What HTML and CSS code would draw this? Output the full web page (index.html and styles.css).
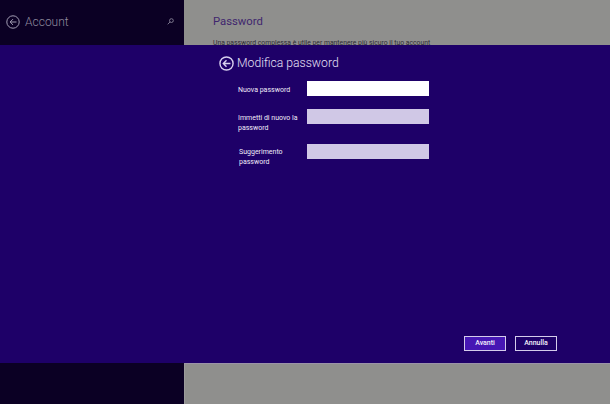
FILE: index.html
```html
<!DOCTYPE html>
<html lang="it">
<head>
<meta charset="utf-8">
<title>Modifica password</title>
<link rel="stylesheet" href="styles.css">
</head>
<body>
<div class="screen">
  <header class="top">
    <div class="side side-head">
      <svg class="back back-dim" viewBox="0 0 16 16" width="14" height="14"><circle cx="8" cy="8" r="7.1"/><path d="M12 8H5M8 4.7 4.7 8 8 11.3"/></svg>
      <span class="side-title">Account</span>
      <svg class="search" viewBox="0 0 10 10" width="7" height="7"><circle cx="6.3" cy="3.7" r="2.7"/><path d="M4.3 5.7 1 9"/></svg>
    </div>
    <div class="pane">
      <h2 class="pane-title">Password</h2>
      <p class="pane-text">Una password complessa è utile per mantenere più sicuro il tuo account</p>
    </div>
  </header>
  <main class="dialog">
    <div class="dialog-body">
      <div class="dialog-head">
        <svg class="back" viewBox="0 0 16 16" width="15" height="15"><circle cx="8" cy="8" r="7"/><path d="M12.2 8H5M8 4.6 4.6 8 8 11.4"/></svg>
        <h1 class="dialog-title">Modifica password</h1>
      </div>
      <form class="form">
        <label class="field field-a"><span class="label">Nuova password</span><span class="input input-active"></span></label>
        <label class="field field-b"><span class="label">Immetti di nuovo la password</span><span class="input"></span></label>
        <label class="field field-c"><span class="label label-c">Suggerimento password</span><span class="input"></span></label>
      </form>
    </div>
    <div class="actions">
      <span class="btn btn-primary">Avanti</span>
      <span class="btn">Annulla</span>
    </div>
  </main>
  <footer class="bottom">
    <div class="side"></div>
    <div class="pane"></div>
  </footer>
</div>
</body>
</html>
```
FILE: styles.css
```css
* { box-sizing: border-box; }
html, body { margin: 0; height: 100%; overflow: hidden; }
body { font-family: Roboto, "Liberation Sans", sans-serif; background: #8f8f8f; }
.screen { width: 610px; height: 404px; display: flex; flex-direction: column; }
.top { height: 45px; display: flex; overflow: hidden; flex: none; }
.bottom { height: 41px; display: flex; flex: none; }
.side { width: 184px; background: #0b0024; flex: none; }
.pane { flex: 1; background: #8f8f8d; }
.bottom .pane { border-top: 1px solid #9b93a8; box-shadow: inset 1px 0 0 #9b9b9b; }
.side-head { display: flex; align-items: center; padding: 0 0 2px 6px; }
.back { fill: none; stroke: #d8d0ee; stroke-width: 1.5; flex: none; }
.back-dim { stroke: #a8a2b8; stroke-width: 1.1; }
.side-title { margin-left: 5px; font-size: 12px; font-weight: 300; color: #8f8a9e; flex: 1; }
.search { fill: none; stroke: #8f8a9e; stroke-width: 1.2; margin-right: 10px; }
.pane { padding-left: 29px; }
.pane-title { margin: 14px 0 0; font-size: 11.3px; line-height: 16px; font-weight: 400; color: #40266e; }
.pane-text { margin: 8px 0 0; font-size: 6.8px; line-height: 10px; color: #2c2a33; white-space: nowrap; }
.dialog { flex: 1; background: #1e0068; padding: 10px 53px 12px 219px; display: flex; flex-direction: column; justify-content: space-between; }
.dialog-head { display: flex; align-items: center; gap: 3px; }
.dialog-title { margin: 0; font-size: 12.2px; line-height: 17px; font-weight: 300; color: #e6e0f6; }
.form { display: flex; flex-direction: column; margin-top: 9px; }
.field { display: flex; align-items: flex-start; width: 210px; }
.field-b { margin-top: 13px; }
.field-c { margin-top: 11px; }
.label { width: 88px; padding-left: 19px; flex: none; font-size: 7px; line-height: 10px; font-weight: 400; color: #f0ecf8; }
.field-a .label { padding-top: 4px; }
.field-b .label { padding-top: 4px; padding-right: 0; }
.label-c { padding-left: 20px; padding-right: 12px; }
.field-c .label { padding-top: 3px; }
.input { width: 122px; height: 15px; flex: none; background: #d0c8e6; }
.input-active { background: #fff; }
.actions { display: flex; justify-content: flex-end; gap: 9px; }
.btn { width: 42px; height: 15px; border: 1px solid #d4cceb; color: #f4f0fb; font-size: 7px; font-weight: 500; line-height: 13px; text-align: center; }
.btn-primary { background: #4617b4; }
```
